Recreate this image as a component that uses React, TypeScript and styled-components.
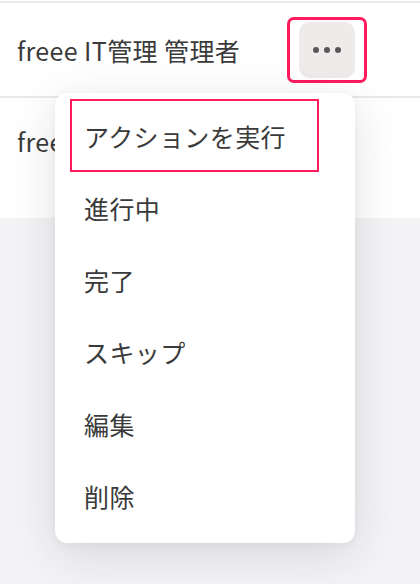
import React from 'react';
import styled, { createGlobalStyle } from 'styled-components';

const GlobalStyle = createGlobalStyle`
  html, body {
    margin: 0;
    padding: 0;
    background: #f4f4f6;
    font-family: "Noto Sans CJK JP", "Noto Sans", sans-serif;
    color: #363636;
  }
`;

const Page = styled.div`
  position: relative;
  width: 420px;
  height: 584px;
  overflow: hidden;
`;

const List = styled.div`
  background: #ffffff;
  padding-top: 1px;
`;

const Row = styled.div<{ tall?: boolean }>`
  display: flex;
  justify-content: space-between;
  align-items: ${props => props.tall ? 'flex-start' : 'center'};
  height: ${props => props.tall ? '122px' : '95px'};
  padding: ${props => props.tall ? '27px 53px 0 17px' : '0 53px 0 17px'};
  box-sizing: border-box;
  border-top: 2px solid #e9e9eb;
`;

const RowLabel = styled.span`
  font-size: 25px;
  line-height: 32px;
  letter-spacing: 0.4px;
  color: #3a3a3a;
`;

const Highlight = styled.div`
  border: 3px solid #ff1b5c;
  border-radius: 7px;
  padding: 2px 9px;
`;

const MoreButton = styled.button`
  display: flex;
  align-items: center;
  justify-content: center;
  gap: 5px;
  width: 56px;
  height: 56px;
  border: 0;
  border-radius: 11px;
  background: #eeebea;
  padding: 0;
`;

const Dot = styled.span`
  width: 6px;
  height: 6px;
  border-radius: 50%;
  background: #575757;
`;

const Menu = styled.div`
  position: absolute;
  top: 93px;
  left: 55px;
  width: 300px;
  box-sizing: border-box;
  padding: 6px 15px 11px;
  background: #ffffff;
  border-radius: 12px;
  box-shadow: 0 12px 48px rgba(30, 30, 50, 0.13), 0 2px 8px rgba(30, 30, 50, 0.05);
`;

const MenuItem = styled.div<{ active?: boolean }>`
  display: flex;
  align-items: center;
  box-sizing: border-box;
  height: ${props => props.active ? '73px' : '72px'};
  width: ${props => props.active ? '249px' : 'auto'};
  padding-left: ${props => props.active ? '12px' : '14px'};
  border: ${props => props.active ? '2px solid #ff1b5c' : '0'};
  font-size: 25px;
  letter-spacing: 0.4px;
  color: #3a3a3a;
`;

const items = ['アクションを実行', '進行中', '完了', 'スキップ', '編集', '削除'];

export default function App() {
  return (
    <Page>
      <GlobalStyle />
      <List>
        <Row>
          <RowLabel>freee IT管理 管理者</RowLabel>
          <Highlight>
            <MoreButton aria-label="more">
              <Dot />
              <Dot />
              <Dot />
            </MoreButton>
          </Highlight>
        </Row>
        <Row tall>
          <RowLabel>freee IT管理 管理者</RowLabel>
        </Row>
      </List>
      <Menu>
        {items.map((label, i) => (
          <MenuItem key={label} active={i === 0}>{label}</MenuItem>
        ))}
      </Menu>
    </Page>
  );
}
